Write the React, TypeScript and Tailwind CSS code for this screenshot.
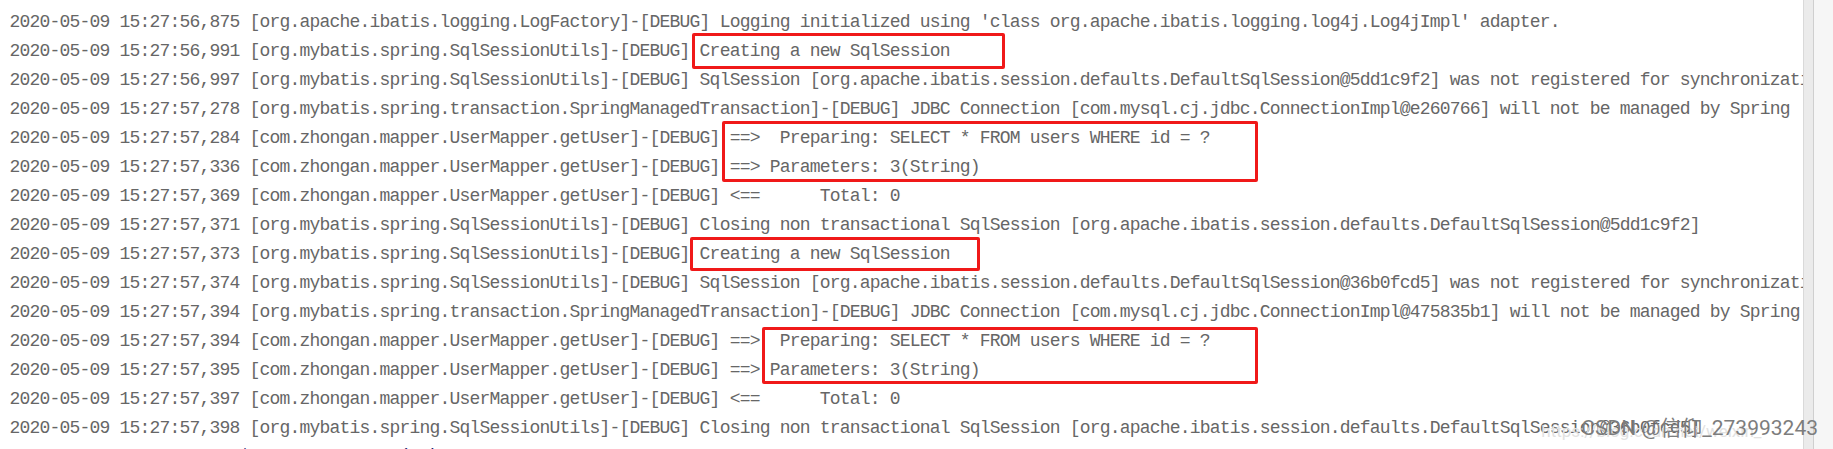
import React from "react";

const lines = [
    "2020-05-09 15:27:56,875 [org.apache.ibatis.logging.LogFactory]-[DEBUG] Logging initialized using 'class org.apache.ibatis.logging.log4j.Log4jImpl' adapter.",
    "2020-05-09 15:27:56,991 [org.mybatis.spring.SqlSessionUtils]-[DEBUG] Creating a new SqlSession",
    "2020-05-09 15:27:56,997 [org.mybatis.spring.SqlSessionUtils]-[DEBUG] SqlSession [org.apache.ibatis.session.defaults.DefaultSqlSession@5dd1c9f2] was not registered for synchronization because synchronization is not active",
    "2020-05-09 15:27:57,278 [org.mybatis.spring.transaction.SpringManagedTransaction]-[DEBUG] JDBC Connection [com.mysql.cj.jdbc.ConnectionImpl@e260766] will not be managed by Spring",
    "2020-05-09 15:27:57,284 [com.zhongan.mapper.UserMapper.getUser]-[DEBUG] ==>  Preparing: SELECT * FROM users WHERE id = ? ",
    "2020-05-09 15:27:57,336 [com.zhongan.mapper.UserMapper.getUser]-[DEBUG] ==> Parameters: 3(String)",
    "2020-05-09 15:27:57,369 [com.zhongan.mapper.UserMapper.getUser]-[DEBUG] <==      Total: 0",
    "2020-05-09 15:27:57,371 [org.mybatis.spring.SqlSessionUtils]-[DEBUG] Closing non transactional SqlSession [org.apache.ibatis.session.defaults.DefaultSqlSession@5dd1c9f2]",
    "2020-05-09 15:27:57,373 [org.mybatis.spring.SqlSessionUtils]-[DEBUG] Creating a new SqlSession",
    "2020-05-09 15:27:57,374 [org.mybatis.spring.SqlSessionUtils]-[DEBUG] SqlSession [org.apache.ibatis.session.defaults.DefaultSqlSession@36b0fcd5] was not registered for synchronization because synchronization is not active",
    "2020-05-09 15:27:57,394 [org.mybatis.spring.transaction.SpringManagedTransaction]-[DEBUG] JDBC Connection [com.mysql.cj.jdbc.ConnectionImpl@475835b1] will not be managed by Spring",
    "2020-05-09 15:27:57,394 [com.zhongan.mapper.UserMapper.getUser]-[DEBUG] ==>  Preparing: SELECT * FROM users WHERE id = ? ",
    "2020-05-09 15:27:57,395 [com.zhongan.mapper.UserMapper.getUser]-[DEBUG] ==> Parameters: 3(String)",
    "2020-05-09 15:27:57,397 [com.zhongan.mapper.UserMapper.getUser]-[DEBUG] <==      Total: 0",
    "2020-05-09 15:27:57,398 [org.mybatis.spring.SqlSessionUtils]-[DEBUG] Closing non transactional SqlSession [org.apache.ibatis.session.defaults.DefaultSqlSession@36b0fcd5]",
];

// red highlight boxes drawn over the console text
const boxes = [
    "left-[692px] top-[33px] w-[313px] h-[36px]",
    "left-[722px] top-[121px] w-[536px] h-[61px]",
    "left-[690px] top-[237px] w-[290px] h-[34px]",
    "left-[762px] top-[327px] w-[496px] h-[57px]",
];

export default function App() {
    return (
        <div className="relative flex h-[449px] w-[1833px] overflow-hidden bg-white">
            <div className="relative flex-1 overflow-hidden">
                <div
                    className="pl-[9.5px] pt-[8px] text-[18px] leading-[29px] tracking-[-0.8px] text-[#666666] whitespace-pre"
                    style={{ fontFamily: '"Liberation Mono", monospace' }}
                >
                    {lines.map((line, i) => (
                        <div key={i}>{line}</div>
                    ))}
                    <div className="-mt-[1px] pl-[60px] text-[#1a1a6e]">
                        {"at com.sun.proxy.$Proxy17.getUser(Unknown"}
                    </div>
                </div>

                {boxes.map((b, i) => (
                    <div
                        key={i}
                        className={`absolute ${b} rounded-[2px] border-[3px] border-[#f01919]`}
                    />
                ))}
            </div>

            <div className="flex w-[30px] shrink-0">
                <div className="w-[10px] border-l border-[#d9d9d9] bg-[#ebebeb]" />
                <div className="w-[20px] border-l border-[#cfcfcf] bg-[#f6f6f6]" />
            </div>

            <div
                className="absolute right-[15px] top-[413px] text-[21px] leading-[30px] text-[#7d7d7d]"
                style={{ fontFamily: 'Roboto, "Noto Sans CJK SC", sans-serif' }}
            >
                <span className="absolute left-[-40px] top-[3px] text-[17px] text-[#e2e2e2] whitespace-nowrap">
                    https://blog.csdn.net/weixin_
                </span>
                <span className="relative whitespace-nowrap">CSDN @信仰_273993243</span>
            </div>
        </div>
    );
}
